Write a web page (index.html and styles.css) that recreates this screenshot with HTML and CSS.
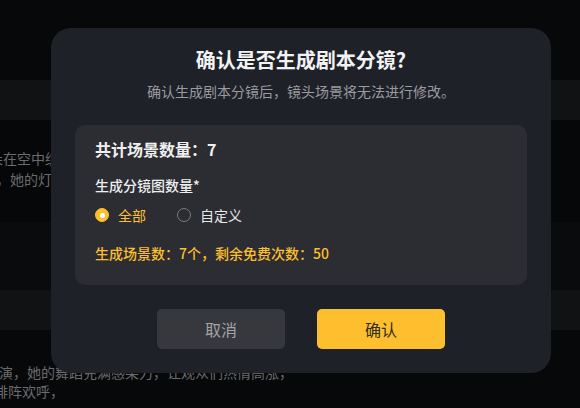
FILE: index.html
```html
<!DOCTYPE html>
<html lang="zh">
<head>
<meta charset="utf-8">
<link rel="stylesheet" href="styles.css">
</head>
<body>
<div class="page">
  <div class="band band-top"></div>
  <div class="band band-row"></div>
  <div class="section section-a">
    <p class="bg-text l1">朵在空中绽放，</p>
    <p class="bg-text l2">，她的灯光</p>
  </div>
  <div class="band band-mid"></div>
  <div class="band band-row"></div>
  <div class="section section-b">
    <p class="bg-text l3">表演，她的舞蹈充满感染力，让观众们热情高涨，</p>
    <p class="bg-text l4">排阵欢呼，</p>
  </div>
</div>

<div class="modal">
  <h1 class="title">确认是否生成剧本分镜?</h1>
  <p class="subtitle">确认生成剧本分镜后，镜头场景将无法进行修改。</p>
  <div class="card">
    <div class="count">共计场景数量：7</div>
    <div class="label">生成分镜图数量*</div>
    <div class="radios">
      <label class="radio active"><span class="dot"></span>全部</label>
      <label class="radio"><span class="dot"></span>自定义</label>
    </div>
    <div class="info">生成场景数：7个，剩余免费次数：50</div>
  </div>
  <div class="actions">
    <button class="btn btn-cancel">取消</button>
    <button class="btn btn-ok">确认</button>
  </div>
</div>
</body>
</html>
```
FILE: styles.css
```css
* { box-sizing: border-box; }
html, body {
  margin: 0;
  padding: 0;
  width: 580px;
  height: 408px;
  overflow: hidden;
  background: #070809;
  font-family: "Noto Sans CJK SC", "Noto Sans", sans-serif;
}
.page {
  width: 580px;
  height: 408px;
  display: flex;
  flex-direction: column;
}
.band { flex: none; }
.band-top { height: 80px; background: #070809; }
.band-row { height: 40px; background: #111214; }
.band-mid { height: 68px; background: #0a0b0d; }
.section { flex: none; overflow: hidden; }
.section-a { height: 102px; padding-top: 29px; background: #060709; }
.section-b { flex: 1; padding-top: 33px; background: #070809; }
.bg-text {
  margin: 0;
  font-size: 14px;
  line-height: 19px;
  color: #6a6b6e;
  white-space: nowrap;
}
.l1 { margin-left: -11px; }
.l2 { margin-left: -4px; line-height: 23px; }
.l3 { margin-left: -15px; }
.l4 { margin-left: -6px; }

.modal {
  position: absolute;
  left: 51px;
  top: 28px;
  width: 500px;
  height: 345px;
  background: #1f2128;
  border-radius: 20px;
  padding: 19px 24px 24px;
  display: flex;
  flex-direction: column;
}
.title {
  margin: 0;
  text-align: center;
  font-size: 20px;
  line-height: 26px;
  font-weight: 700;
  color: #f2f2f2;
}
.subtitle {
  margin: 8px 0 0;
  text-align: center;
  font-size: 14px;
  line-height: 20px;
  color: #9a9ba0;
}
.card {
  margin-top: 24px;
  background: #2c2d33;
  border-radius: 10px;
  padding: 12px 20px 20px;
  height: 160px;
}
.count {
  font-size: 16px;
  line-height: 24px;
  font-weight: 700;
  color: #f0f0f0;
}
.label {
  margin-top: 13px;
  font-size: 14px;
  line-height: 22px;
  font-weight: 500;
  color: #eeeeee;
}
.radios {
  margin-top: 9px;
  display: flex;
  gap: 31px;
  height: 20px;
  align-items: center;
}
.radio {
  display: flex;
  align-items: center;
  gap: 9px;
  font-size: 14px;
  line-height: 20px;
  color: #e8e8e8;
}
.radio .dot {
  width: 14px;
  height: 14px;
  border-radius: 50%;
  border: 1px solid #7a7b80;
  display: inline-flex;
  align-items: center;
  justify-content: center;
}
.radio.active { color: #fdbf2d; }
.radio.active .dot {
  background: #fdbf2d;
  border-color: #fdbf2d;
}
.radio.active .dot::after {
  content: "";
  width: 5px;
  height: 5px;
  border-radius: 50%;
  background: #ffffff;
}
.info {
  margin-top: 17px;
  font-size: 14px;
  line-height: 22px;
  font-weight: 500;
  color: #fdbf2d;
}
.actions {
  margin-top: 24px;
  display: flex;
  justify-content: center;
  gap: 32px;
}
.btn {
  width: 128px;
  height: 40px;
  border: none;
  border-radius: 5px;
  font-family: inherit;
  font-size: 16px;
}
.btn-cancel { background: #37383d; color: #a2a3a7; }
.btn-ok { background: #fdbf2d; color: #2f2a22; }
```
